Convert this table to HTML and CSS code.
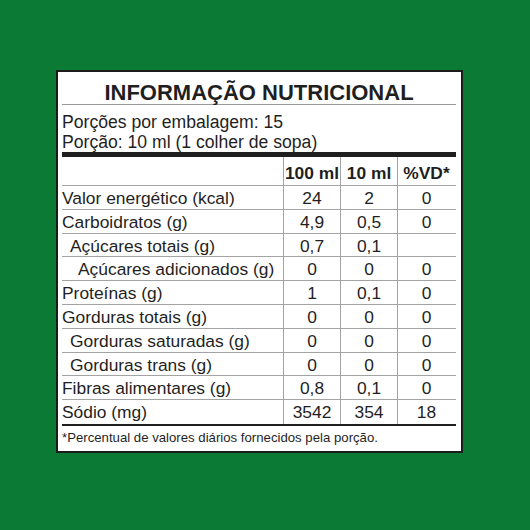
FILE: index.html
```html
<!DOCTYPE html>
<html lang="pt">
<head>
<meta charset="utf-8">
<title>Informação Nutricional</title>
<link rel="stylesheet" href="styles.css">
</head>
<body>
<div class="label">
  <h1 class="title">INFORMAÇÃO NUTRICIONAL</h1>
  <div class="serving">
    <div>Porções por embalagem: 15</div>
    <div>Porção: 10 ml (1 colher de sopa)</div>
  </div>
  <div class="table">
    <div class="row head">
      <div class="c name"></div>
      <div class="c v">100 ml</div>
      <div class="c v">10 ml</div>
      <div class="c v">%VD*</div>
    </div>
    <div class="row"><div class="c name">Valor energético (kcal)</div><div class="c v">24</div><div class="c v">2</div><div class="c v">0</div></div>
    <div class="row"><div class="c name">Carboidratos (g)</div><div class="c v">4,9</div><div class="c v">0,5</div><div class="c v">0</div></div>
    <div class="row"><div class="c name i1">Açúcares totais (g)</div><div class="c v">0,7</div><div class="c v">0,1</div><div class="c v"></div></div>
    <div class="row"><div class="c name i2">Açúcares adicionados (g)</div><div class="c v">0</div><div class="c v">0</div><div class="c v">0</div></div>
    <div class="row"><div class="c name">Proteínas (g)</div><div class="c v">1</div><div class="c v">0,1</div><div class="c v">0</div></div>
    <div class="row"><div class="c name">Gorduras totais (g)</div><div class="c v">0</div><div class="c v">0</div><div class="c v">0</div></div>
    <div class="row"><div class="c name i1">Gorduras saturadas (g)</div><div class="c v">0</div><div class="c v">0</div><div class="c v">0</div></div>
    <div class="row"><div class="c name i1">Gorduras trans (g)</div><div class="c v">0</div><div class="c v">0</div><div class="c v">0</div></div>
    <div class="row"><div class="c name">Fibras alimentares (g)</div><div class="c v">0,8</div><div class="c v">0,1</div><div class="c v">0</div></div>
    <div class="row last"><div class="c name">Sódio (mg)</div><div class="c v">3542</div><div class="c v">354</div><div class="c v">18</div></div>
  </div>
  <div class="note">*Percentual de valores diários fornecidos pela porção.</div>
</div>
</body>
</html>
```
FILE: styles.css
```css
html, body {
  margin: 0;
  padding: 0;
}
body {
  width: 530px;
  height: 530px;
  background: #0a7a35;
  font-family: "Liberation Sans", Arial, sans-serif;
  color: #1f1f1f;
  padding-top: 70px;
  box-sizing: border-box;
}
.label {
  margin-left: 56px;
  width: 407px;
  height: 383px;
  box-sizing: border-box;
  background: #fff;
  border: 2px solid #1c1c1c;
  padding: 0 5px 0 4px;
}
.title {
  margin: 0;
  height: 32px;
  line-height: 41px;
  font-size: 22px;
  font-weight: bold;
  text-align: center;
  border-bottom: 1px solid #9a9a9a;
}
.serving {
  font-size: 17.6px;
  line-height: 20px;
  padding: 7px 0 0 0;
  height: 40px;
}
.table {
  border-top: 5px solid #1f1f1f;
  border-bottom: 2px solid #1f1f1f;
}
.row {
  display: flex;
  height: 23.8px;
  border-bottom: 1px solid #a3a3a3;
  box-sizing: border-box;
  font-size: 17.4px;
  line-height: 25px;
}
.row.head {
  height: 29px;
  line-height: 33px;
  font-weight: bold;
}
.row.last {
  border-bottom: none;
}
.c {
  white-space: nowrap;
  box-sizing: border-box;
}
.name {
  width: 221px;
  flex: none;
}
.v {
  width: 57px;
  flex: none;
  text-align: center;
  border-left: 1px solid #a3a3a3;
}
.v:last-child {
  width: 58px;
}
.i1 {
  padding-left: 8px;
}
.i2 {
  padding-left: 16px;
}
.note {
  font-size: 13.2px;
  line-height: 20px;
  padding-top: 2px;
}
```
